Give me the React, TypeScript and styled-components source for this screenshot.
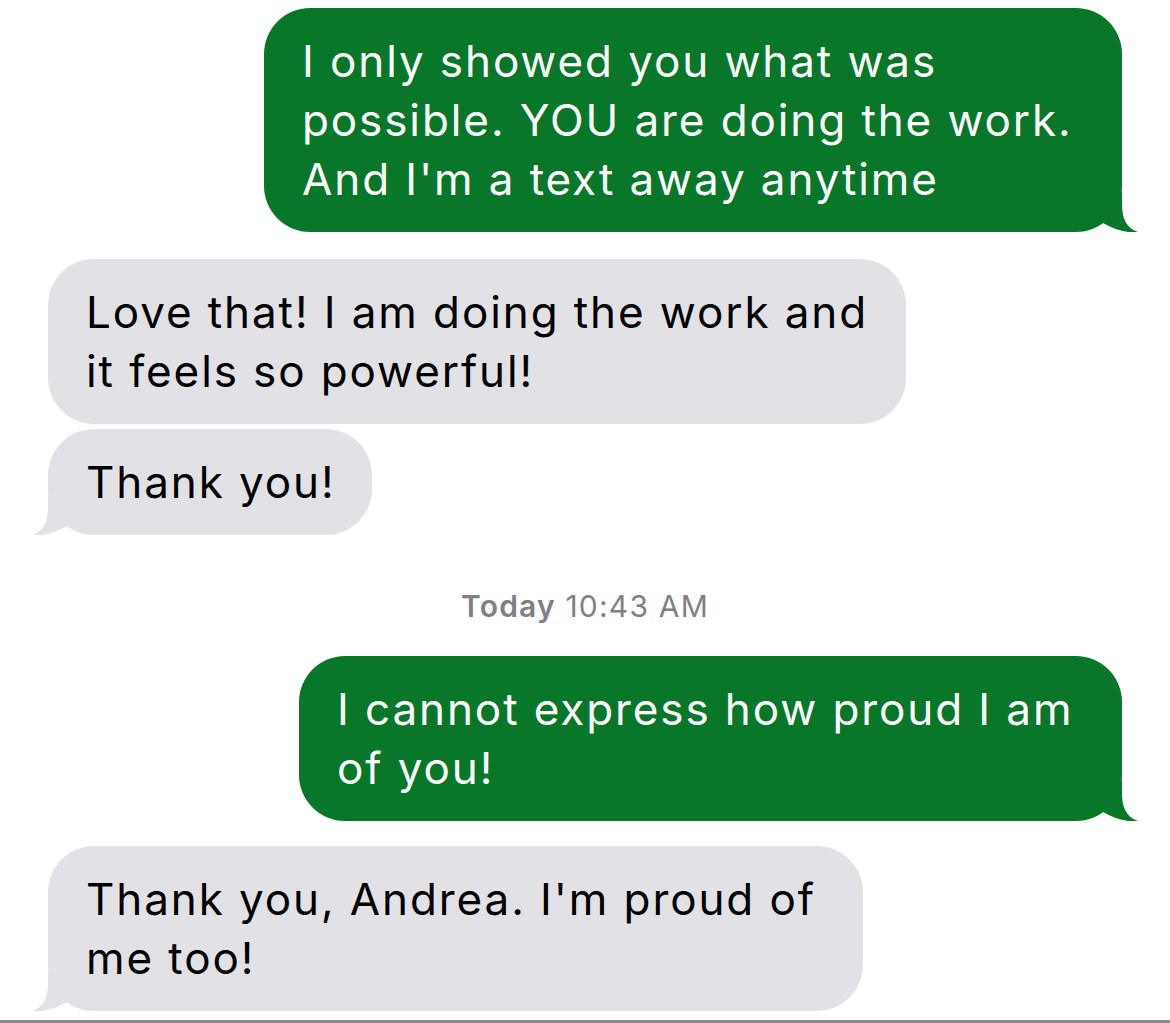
import React from "react";
import styled, { createGlobalStyle } from "styled-components";

const GlobalStyle = createGlobalStyle`
  html, body {
    margin: 0;
    padding: 0;
    background: #ffffff;
  }
  body {
    font-family: Inter, "Open Sans", "Liberation Sans", sans-serif;
    -webkit-font-smoothing: antialiased;
  }
`;

const GREEN = "#087729";
const GRAY = "#e2e2e6";

const Thread = styled.div`
  width: 1170px;
  height: 1023px;
  box-sizing: border-box;
  padding: 8px 48px 0;
  display: flex;
  flex-direction: column;
  position: relative;
  overflow: hidden;
  border-bottom: 3px solid #8a8a8a;
`;

const Row = styled.div<{ $mine?: boolean; $gap: number }>`
  display: flex;
  justify-content: ${(p) => (p.$mine ? "flex-end" : "flex-start")};
  margin-top: ${(p) => p.$gap}px;
`;

const Bubble = styled.div<{ $mine?: boolean; $width: number }>`
  position: relative;
  box-sizing: border-box;
  width: ${(p) => p.$width}px;
  padding: 24px 30px 23px 38px;
  border-radius: 46px;
  background: ${(p) => (p.$mine ? GREEN : GRAY)};
  color: ${(p) => (p.$mine ? "#ffffff" : "#000000")};
  font-size: 44px;
  line-height: 59px;
  letter-spacing: 1.9px;
  white-space: nowrap;
`;

const TailSvg = styled.svg<{ $mine?: boolean }>`
  position: absolute;
  bottom: 0;
  width: 48px;
  height: 40px;
  ${(p) => (p.$mine ? "right: -17px;" : "left: -17px; transform: scaleX(-1);")}
`;

const Stamp = styled.div`
  margin-top: 54px;
  text-align: center;
  font-size: 30px;
  line-height: 34px;
  color: #7f7f84;
  letter-spacing: 1.2px;

  b {
    font-weight: 600;
  }
`;

const Tail = ({ mine }: { mine?: boolean }) => (
  <TailSvg $mine={mine} viewBox="0 0 48 40">
    <path
      d="M14 0 H31 V12 C31 26 35 36 47 40 C37 41.5 24 38 12 31 Z"
      fill={mine ? GREEN : GRAY}
    />
  </TailSvg>
);

type Msg = {
  mine?: boolean;
  width: number;
  gap: number;
  tail?: boolean;
  lines: string[];
};

const before: Msg[] = [
  {
    mine: true,
    width: 858,
    gap: 0,
    tail: true,
    lines: [
      "I only showed you what was",
      "possible. YOU are doing the work.",
      "And I'm a text away anytime",
    ],
  },
  {
    width: 858,
    gap: 27,
    lines: ["Love that! I am doing the work and", "it feels so powerful!"],
  },
  { width: 324, gap: 5, tail: true, lines: ["Thank you!"] },
];

const after: Msg[] = [
  {
    mine: true,
    width: 823,
    gap: 33,
    tail: true,
    lines: ["I cannot express how proud I am", "of you!"],
  },
  {
    width: 815,
    gap: 25,
    tail: true,
    lines: ["Thank you, Andrea. I'm proud of", "me too!"],
  },
];

const Message = ({ m }: { m: Msg }) => (
  <Row $mine={m.mine} $gap={m.gap}>
    <Bubble $mine={m.mine} $width={m.width}>
      {m.lines.map((l, i) => (
        <div key={i}>{l}</div>
      ))}
      {m.tail && <Tail mine={m.mine} />}
    </Bubble>
  </Row>
);

export default function App() {
  return (
    <>
      <GlobalStyle />
      <Thread>
        {before.map((m, i) => (
          <Message key={i} m={m} />
        ))}
        <Stamp>
          <b>Today</b> 10:43 AM
        </Stamp>
        {after.map((m, i) => (
          <Message key={i} m={m} />
        ))}
      </Thread>
    </>
  );
}
